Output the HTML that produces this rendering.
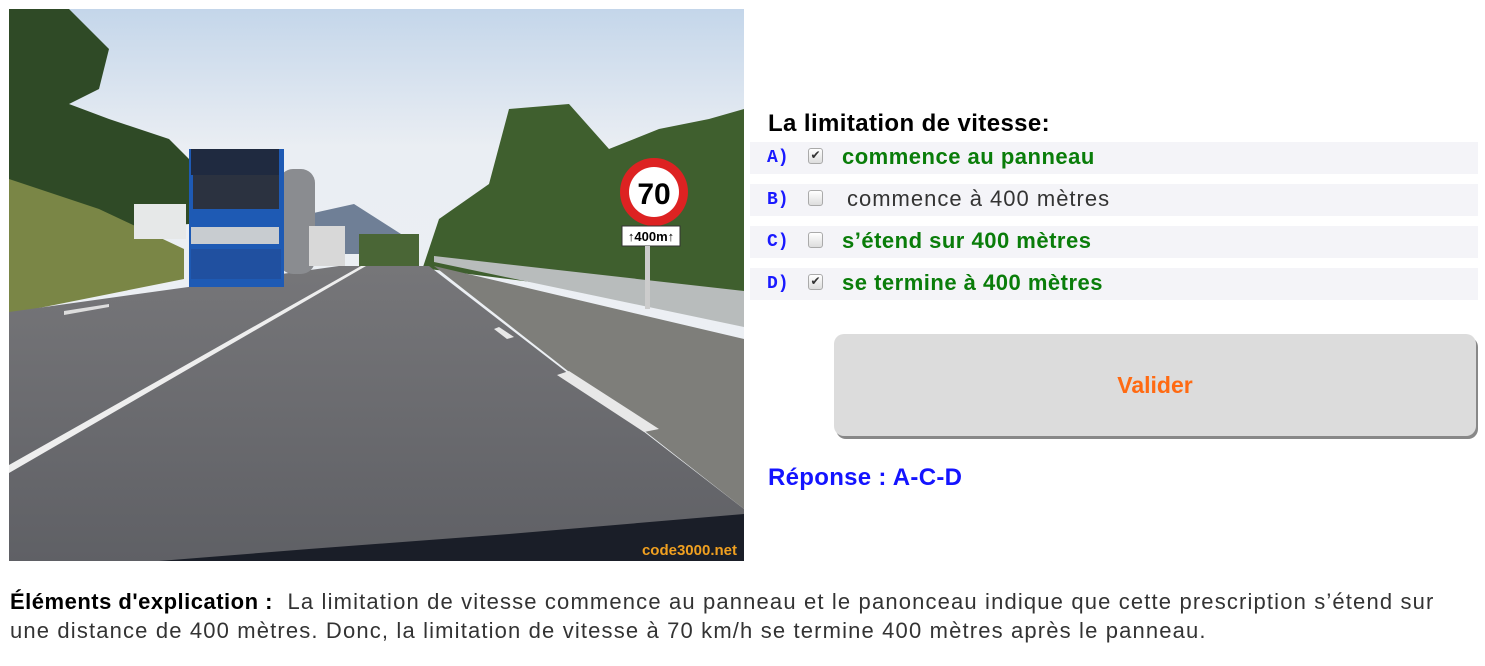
<!DOCTYPE html>
<html><head><meta charset="utf-8">
<style>
html,body{margin:0;padding:0;background:#fff;width:1485px;height:666px;overflow:hidden;}
body{font-family:"Liberation Sans",sans-serif;position:relative;}
.img{position:absolute;left:9px;top:9px;width:735px;height:552px;}
.title{position:absolute;left:768px;top:110px;font-weight:bold;font-size:24px;color:#000;letter-spacing:0.4px;}
.row{position:absolute;left:750px;width:728px;height:32px;background:#f4f4f8;}
.lab{position:absolute;left:17px;top:6px;font-family:"Liberation Mono",monospace;font-weight:bold;font-size:18px;color:#1a1aff;}
.cb{position:absolute;left:58px;top:6px;width:13px;height:14px;border:1px solid #aaa;border-radius:3px;background:linear-gradient(#fff,#ddd);font-size:12px;line-height:13px;text-align:center;color:#333;font-family:"DejaVu Sans",sans-serif;}
.txt{position:absolute;left:92px;top:2px;font-size:22px;}
.g{color:#0a7d0a;font-weight:bold;letter-spacing:0.5px;}
.n{color:#333;letter-spacing:1px;}
.btn{position:absolute;left:834px;top:334px;width:642px;height:102px;background:#dcdcdc;border-radius:10px;box-shadow:2px 3px 0 #888;text-align:center;line-height:102px;font-weight:bold;font-size:23px;color:#ff6a12;}
.rep{position:absolute;left:768px;top:464px;font-weight:bold;font-size:24px;color:#1414ff;letter-spacing:0.3px;}
.exp{position:absolute;left:10px;top:587px;font-size:22px;line-height:29px;color:#333;white-space:nowrap;letter-spacing:1.15px;}
.exp b{color:#000;letter-spacing:0.5px;}
</style></head><body>
<svg class="img" viewBox="0 0 735 552" xmlns="http://www.w3.org/2000/svg">
<defs>
<linearGradient id="sky" x1="0" y1="0" x2="0" y2="1"><stop offset="0" stop-color="#c4d6ea"/><stop offset="0.25" stop-color="#eaeef3"/><stop offset="1" stop-color="#eef1f4"/></linearGradient>
<linearGradient id="road" x1="0" y1="0" x2="0" y2="1"><stop offset="0" stop-color="#767679"/><stop offset="1" stop-color="#5f6065"/></linearGradient>
</defs>
<rect width="735" height="552" fill="url(#sky)"/>
<path d="M300 205 L345 195 L392 225 L392 245 L300 245Z" fill="#6f7f96"/>
<path d="M0 0 L60 0 L100 40 L90 80 L60 95 L100 110 L160 130 L180 150 L180 215 L0 230Z" fill="#2f4a26"/>
<path d="M0 170 L90 200 L175 240 L175 270 L0 305Z" fill="#7a8646"/>
<path d="M410 270 L430 210 L480 175 L500 100 L560 95 L600 140 L650 120 L700 110 L735 100 L735 300 L420 260Z" fill="#3f5f2e"/>
<path d="M350 225 L410 225 L410 257 L350 257Z" fill="#4a6636"/>
<path d="M0 303 L330 257 L420 257 L735 500 L735 552 L0 552Z" fill="url(#road)"/>
<path d="M425 257 L735 330 L735 500Z" fill="#7e7e7a"/>
<path d="M0 456 L352 257 L357 257 L0 464Z" fill="#eee"/>
<path d="M55 302 L100 295 L100 298 L55 306Z" fill="#ddd"/>
<path d="M490 318 L505 328 L498 330 L485 320Z M560 362 L650 420 L635 423 L548 366Z" fill="#e8e8e8"/>
<path d="M425 247 L735 282 L735 318 L425 253Z" fill="#b8bcbc"/>
<rect x="125" y="195" width="52" height="35" fill="#e6e8e8"/>
<rect x="270" y="160" width="36" height="105" fill="#8a8c90" rx="14"/>
<rect x="180" y="140" width="95" height="138" fill="#1e5ab4"/>
<rect x="182" y="140" width="88" height="26" fill="#1f2a40"/>
<rect x="184" y="166" width="86" height="34" fill="#2b3240"/>
<rect x="182" y="218" width="88" height="17" fill="#c8ccd0"/>
<rect x="182" y="240" width="90" height="30" fill="#2050a0"/>
<rect x="300" y="217" width="36" height="40" fill="#d8d8d8"/>
<circle cx="645" cy="183" r="34" fill="#d22"/>
<circle cx="645" cy="183" r="25" fill="#fff"/>
<text x="645" y="195" font-family="Liberation Sans" font-weight="bold" font-size="30" text-anchor="middle" fill="#000">70</text>
<rect x="613" y="217" width="58" height="20" fill="#fff" stroke="#333"/>
<text x="642" y="232" font-family="Liberation Sans" font-weight="bold" font-size="13" text-anchor="middle" fill="#000">↑400m↑</text>
<rect x="636" y="237" width="5" height="63" fill="#ccc"/>
<path d="M150 552 L300 540 L500 525 L735 505 L735 552Z" fill="#1a1e28"/>
<text x="728" y="546" font-family="Liberation Sans" font-weight="bold" font-size="15" text-anchor="end" fill="#f0a020">code3000.net</text>
</svg>
<div class="title">La limitation de vitesse:</div>
<div class="row" style="top:142px"><span class="lab">A)</span><span class="cb">✔</span><span class="txt g">commence au panneau</span></div>
<div class="row" style="top:184px"><span class="lab">B)</span><span class="cb"></span><span class="txt n" style="left:97px">commence à 400 mètres</span></div>
<div class="row" style="top:226px"><span class="lab">C)</span><span class="cb"></span><span class="txt g">s’étend sur 400 mètres</span></div>
<div class="row" style="top:268px"><span class="lab">D)</span><span class="cb">✔</span><span class="txt g">se termine à 400 mètres</span></div>
<div class="btn">Valider</div>
<div class="rep">Réponse : A-C-D</div>
<div class="exp"><b>Éléments d'explication :</b>&nbsp; La limitation de vitesse commence au panneau et le panonceau indique que cette prescription s’étend sur<br>une distance de 400 mètres. Donc, la limitation de vitesse à 70 km/h se termine 400 mètres après le panneau.</div>
</body></html>
